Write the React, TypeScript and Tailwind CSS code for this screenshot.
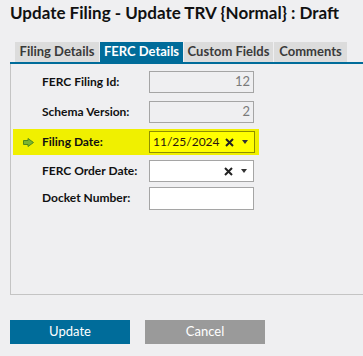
import React from 'react';

type Campo = {
  label: string;
  tipo: 'solo-lectura' | 'fecha' | 'texto';
  valor?: string;
  resaltado?: boolean;
  mt: string;
};

const CAMPOS: Campo[] = [
  { label: 'FERC Filing Id:', tipo: 'solo-lectura', valor: '12', mt: 'mt-[5px]' },
  { label: 'Schema Version:', tipo: 'solo-lectura', valor: '2', mt: 'mt-[4px]' },
  { label: 'Filing Date:', tipo: 'fecha', valor: '11/25/2024', resaltado: true, mt: 'mt-[4px]' },
  { label: 'FERC Order Date:', tipo: 'fecha', mt: 'mt-[3px]' },
  { label: 'Docket Number:', tipo: 'texto', mt: 'mt-[1px]' },
];

const PESTANAS = [
  { nombre: 'Filing Details', ancho: 'w-[84px]' },
  { nombre: 'FERC Details', ancho: 'w-[83px]', activa: true },
  { nombre: 'Custom Fields', ancho: 'w-[89px]' },
  { nombre: 'Comments', ancho: 'w-[73px]' },
];

function Flecha() {
  return (
    <svg width="11" height="9" viewBox="0 0 11 9" className="block">
      <path d="M0.5 2.5 H5 V0.5 L10.5 4.5 L5 8.5 V6.5 H0.5 Z" fill="#7cb530" stroke="#4e8a1c" strokeWidth="1" />
    </svg>
  );
}

function Cruz() {
  return (
    <svg width="9" height="9" viewBox="0 0 9 9" className="block">
      <path d="M1 1 L8 8 M8 1 L1 8" stroke="#222" strokeWidth="2" />
    </svg>
  );
}

function Triangulo() {
  return (
    <svg width="6" height="4" viewBox="0 0 6 4" className="block">
      <path d="M0 0 H6 L3 4 Z" fill="#333" />
    </svg>
  );
}

function Entrada({ campo }: { campo: Campo }) {
  if (campo.tipo === 'solo-lectura') {
    return (
      <div className="flex h-[22px] w-[105px] items-center justify-end border border-[#a5a5a5] bg-[#efeff1] px-[3px] text-[13px] text-[#7a7a7a]">
        {campo.valor}
      </div>
    );
  }
  if (campo.tipo === 'fecha') {
    return (
      <div
        className={
          campo.resaltado
            ? 'flex h-[22px] w-[106px] items-center border border-[#8f8f00] bg-[#ffff00] pl-[3px] pr-[6px] text-[12px] text-[#2a1510]'
            : 'flex h-[22px] w-[105px] items-center border border-[#a5a5a5] bg-white pl-[3px] pr-[6px] text-[12px]'
        }
      >
        <span className="min-w-0 flex-1 whitespace-nowrap">{campo.valor}</span>
        <span className="flex-none">
          <Cruz />
        </span>
        <span className="ml-[8px] flex-none">
          <Triangulo />
        </span>
      </div>
    );
  }
  return <div className="h-[23px] w-[105px] border border-[#a5a5a5] bg-white" />;
}

export default function App() {
  return (
    <div className="h-[356px] w-[363px] overflow-hidden bg-[#efeff1] font-['Lato',sans-serif] text-[#111]">
      <h1 className="h-[25px] whitespace-nowrap pl-[10px] pt-[1px] text-[17px] font-bold leading-[24px]">
        Update Filing - Update TRV {'{Normal}'} : Draft
      </h1>

      <div className="ml-[10px] mt-[17px] border-b-2 border-[#006c9a]">
        <div className="ml-[5px] flex gap-[1px]">
          {PESTANAS.map((p) => (
            <div
              key={p.nombre}
              className={
                'flex h-[20px] items-center justify-center whitespace-nowrap text-[13px] font-bold ' +
                p.ancho +
                (p.activa ? ' bg-[#006c9a] text-white' : ' bg-[#dcdcdc] text-[#3a3a3a]')
              }
            >
              {p.nombre}
            </div>
          ))}
        </div>
      </div>

      {/* flex-col para que el margen de la primera fila no colapse hacia fuera del panel */}
      <div className="ml-[10px] flex h-[231px] flex-col border-b border-l border-[#c4c4c4]">
        {CAMPOS.map((c) => (
          <div
            key={c.label}
            className={
              'ml-[2px] flex h-[26px] w-[246px] flex-none items-center ' +
              c.mt +
              (c.resaltado ? ' bg-[#f0f000]' : '')
            }
          >
            <div className="flex w-[29px] justify-center pl-[2px]">{c.resaltado && <Flecha />}</div>
            <div className="w-[107px] whitespace-nowrap text-[12px] font-bold">{c.label}</div>
            <Entrada campo={c} />
          </div>
        ))}
      </div>

      <div className="ml-[10px] mt-[25px] flex gap-[15px]">
        <button className="h-[24px] w-[120px] bg-[#006c9a] text-[13px] text-white">Update</button>
        <button className="h-[24px] w-[120px] bg-[#9a9a9a] text-[13px] text-white">Cancel</button>
      </div>
    </div>
  );
}
